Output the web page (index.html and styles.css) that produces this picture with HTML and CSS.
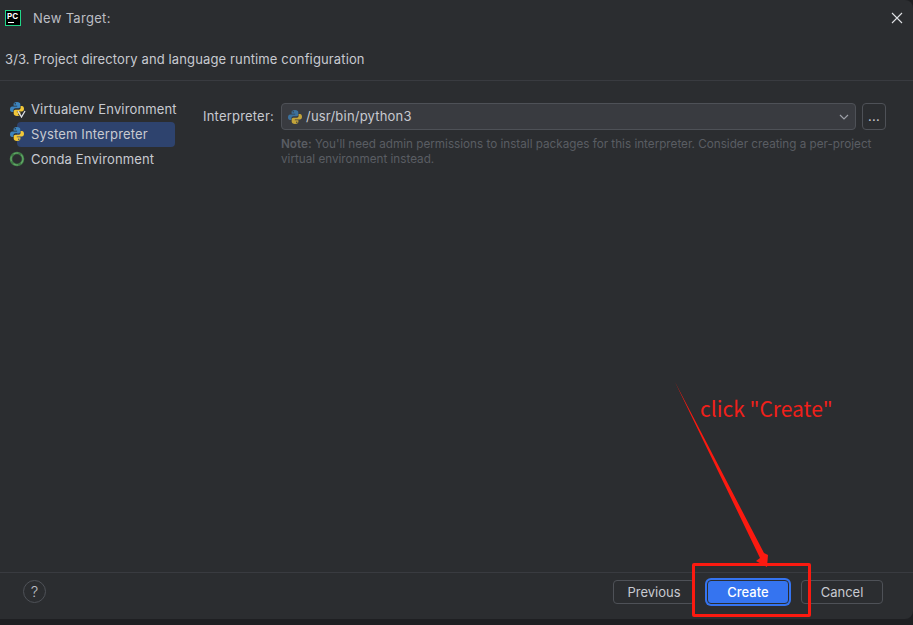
FILE: index.html
```html
<!DOCTYPE html>
<html lang="en">
<head>
    <meta charset="UTF-8">
    <meta name="viewport" content="width=device-width, initial-scale=1.0">
    <title>New Target</title>
    <link rel="stylesheet" href="styles.css">
</head>
<body>
    <svg class="defs" width="0" height="0">
        <defs>
            <symbol id="python" viewBox="0 0 16 16">
                <path fill="#3d84bd" d="M8 1C5.4 1 4.600 2 4.600 3.200V4.800H8.200V5.400H3.200C1.900 5.400 1 6.500 1 8.200 1 9.900 1.800 11 3 11H4.400V9.300C4.400 8 5.400 7.200 6.600 7.200H9.600C10.600 7.200 11.300 6.500 11.300 5.500V3.200C11.300 2 10.200 1 8 1ZM6.200 2.100A.7 .7 0 1 1 6.200 3.500 .7 .7 0 0 1 6.200 2.100Z"/>
                <path fill="#f2c838" d="M8 15C10.600 15 11.400 14 11.400 12.800V11.200H7.800V10.600H12.800C14.100 10.600 15 9.500 15 7.800 15 6.100 14.200 5 13 5H11.600V6.700C11.600 8 10.600 8.800 9.400 8.800H6.400C5.400 8.800 4.700 9.500 4.700 10.500V12.800C4.700 14 5.800 15 8 15ZM9.800 13.900A.7 .7 0 1 1 9.800 12.500 .7 .7 0 0 1 9.800 13.900Z"/>
            </symbol>
        </defs>
    </svg>

    <div class="dialog">
        <!-- Title bar -->
        <div class="title-bar">
            <div class="app-logo"><span class="logo-text">PC</span><span class="logo-bar"></span></div>
            <span class="title">New Target:</span>
            <svg class="close-icon" width="12" height="12" viewBox="0 0 12 12">
                <path d="M1 1L11 11M11 1L1 11" stroke="#dfe1e5" stroke-width="1.1" fill="none"/>
            </svg>
        </div>

        <div class="step-title">3/3. Project directory and language runtime configuration</div>

        <div class="main">
            <!-- Left list -->
            <ul class="env-list">
                <li class="env-item">
                    <span class="env-icon">
                        <svg width="16" height="16"><use href="#python"/></svg>
                        <svg class="venv-mark" width="9" height="8" viewBox="0 0 9 8"><path d="M1 1L4.500 7L8 1" stroke="#dfe1e5" stroke-width="1.300" fill="none"/></svg>
                    </span>
                    Virtualenv Environment
                </li>
                <li class="env-item selected">
                    <span class="env-icon"><svg width="16" height="16"><use href="#python"/></svg></span>
                    System Interpreter
                </li>
                <li class="env-item">
                    <span class="env-icon">
                        <svg width="16" height="16" viewBox="0 0 16 16">
                            <circle cx="8" cy="8" r="6" fill="none" stroke="#3f7a45" stroke-width="2.600"/>
                            <circle cx="8" cy="8" r="6" fill="none" stroke="#62a868" stroke-width="1.200" stroke-dasharray="5 3"/>
                        </svg>
                    </span>
                    Conda Environment
                </li>
            </ul>

            <!-- Interpreter form -->
            <div class="form">
                <div class="form-row">
                    <label class="form-label">Interpreter:</label>
                    <div class="select">
                        <svg class="select-python" width="16" height="16"><use href="#python"/></svg>
                        <span class="select-value">/usr/bin/python3</span>
                        <svg class="chevron" width="10" height="6" viewBox="0 0 10 6"><path d="M1 1L5 5L9 1" stroke="#9da0a8" stroke-width="1.200" fill="none"/></svg>
                    </div>
                    <div class="browse-btn">...</div>
                </div>
                <p class="note"><b class="note-label">Note:</b> You'll need admin permissions to install packages for this interpreter. Consider creating a per-project virtual environment instead.</p>
            </div>
        </div>

        <!-- Footer buttons -->
        <div class="footer">
            <div class="help-btn">?</div>
            <div class="btn">Previous</div>
            <div class="btn btn-primary">Create</div>
            <div class="btn">Cancel</div>
        </div>
    </div>

    <!-- Red annotation drawn on top of the screenshot -->
    <svg class="mark-arrow" width="913" height="625" viewBox="0 0 913 625">
        <path fill="#fb1a10" d="M675 382L764 553L768 555L767 567L756 561L760 558Z"/>
    </svg>
    <div class="mark-box"></div>
    <div class="mark-text">click "Create"</div>
</body>
</html>
```

FILE: styles.css
```css
body {
    font-family: Inter, "Noto Sans", sans-serif;
    font-size: 13px;
    letter-spacing: 0.2px;
    margin: 0;
    padding: 0;
    background-color: #1e1f22;
    color: #dfe1e5;
    overflow: hidden;
}

.defs {
    position: absolute;
}

.dialog {
    display: flex;
    flex-direction: column;
    height: 619px;
    background-color: #2b2d30;
    border-bottom-right-radius: 8px;
    border-top-right-radius: 8px;
}

/* Title bar */
.title-bar {
    display: flex;
    align-items: center;
    height: 36px;
    padding: 0 10px 0 5px;
}

.app-logo {
    position: relative;
    box-sizing: border-box;
    width: 16px;
    height: 16px;
    background-color: #000;
    border: 1px solid #21d789;
    margin-right: 12px;
}

.logo-text {
    position: absolute;
    left: 1px;
    top: 1px;
    font-size: 8px;
    line-height: 9px;
    font-weight: 700;
    letter-spacing: 0;
    color: #fff;
}

.logo-bar {
    position: absolute;
    left: 2px;
    bottom: 2px;
    width: 6px;
    height: 1px;
    background-color: #fff;
}

.title {
    flex: 1;
    color: #bcbec4;
    letter-spacing: 0.3px;
}

.step-title {
    height: 44px;
    line-height: 47px;
    padding-left: 5px;
    letter-spacing: 0.13px;
    color: #c8cad0;
    border-bottom: 1px solid #393b40;
}

/* Main area */
.main {
    flex: 1;
    display: flex;
    padding-top: 16px;
}

.env-list {
    list-style: none;
    width: 175px;
    margin: 0;
    padding: 0;
    flex-shrink: 0;
    letter-spacing: 0.15px;
}

.env-item {
    display: flex;
    align-items: center;
    box-sizing: border-box;
    height: 25px;
    margin-left: 17px;
    padding: 0 0 2px 14px;
    position: relative;
    color: #c8cad0;
    white-space: nowrap;
    border-radius: 4px;
}

.env-item.selected {
    background-color: #2e436e;
}

.env-icon {
    position: absolute;
    left: -8px;
    top: 4px;
    width: 16px;
    height: 16px;
}

.env-icon svg {
    display: block;
}

.env-icon .venv-mark {
    position: absolute;
    right: -1px;
    bottom: -1px;
}

.form {
    flex: 1;
    padding: 6px 27px 0 28px;
}

.form-row {
    display: flex;
    align-items: center;
}

.form-label {
    width: 78px;
    padding-bottom: 1px;
    color: #c8cad0;
}

.select {
    flex: 1;
    display: flex;
    align-items: center;
    box-sizing: border-box;
    height: 27px;
    padding: 0 6px 0 5px;
    background-color: #393b40;
    border: 1px solid #4e5157;
    border-radius: 4px;
}

.select-python {
    opacity: 0.75;
    margin-right: 3px;
}

.select-value {
    flex: 1;
    padding-bottom: 1px;
    color: #c8cad0;
}

.browse-btn {
    box-sizing: border-box;
    width: 24px;
    height: 27px;
    margin-left: 6px;
    border: 1px solid #4e5157;
    border-radius: 4px;
    text-align: center;
    line-height: 25px;
    color: #c8cad0;
}

.note {
    margin: 7px 0 0 78px;
    font-size: 11.7px;
    letter-spacing: 0;
    line-height: 15px;
    color: #5a5d63;
}

.note-label {
    font-weight: 600;
}

/* Footer */
.footer {
    display: flex;
    align-items: flex-start;
    box-sizing: border-box;
    height: 47px;
    padding: 7px 30px 0 23px;
    border-top: 1px solid #393b40;
    letter-spacing: 0;
}

.help-btn {
    box-sizing: border-box;
    width: 23px;
    height: 23px;
    margin-right: auto;
    border: 1px solid #4e5157;
    border-radius: 50%;
    text-align: center;
    line-height: 21px;
    font-size: 15px;
    font-weight: 300;
    color: #bcbec4;
}

.btn {
    box-sizing: border-box;
    width: 82px;
    height: 24px;
    margin-left: 12px;
    border: 1px solid #4e5157;
    border-radius: 4px;
    text-align: center;
    line-height: 22px;
    color: #c8cad0;
}

.btn-primary {
    background-color: #3574f0;
    border-color: #2b2d30;
    box-shadow: 0 0 0 2px #3574f0;
    color: #fff;
    font-weight: 500;
}

/* Annotation */
.mark-arrow {
    position: absolute;
    left: 0;
    top: 0;
}

.mark-box {
    position: absolute;
    left: 692px;
    top: 563px;
    width: 113px;
    height: 48px;
    border: 3px solid #fb1a10;
    border-radius: 2px;
}

.mark-text {
    position: absolute;
    left: 700px;
    top: 392px;
    font-family: "Noto Sans CJK SC", "Noto Sans", sans-serif;
    font-size: 21px;
    letter-spacing: 0;
    line-height: 32px;
    color: #f0201a;
    white-space: nowrap;
}
```
